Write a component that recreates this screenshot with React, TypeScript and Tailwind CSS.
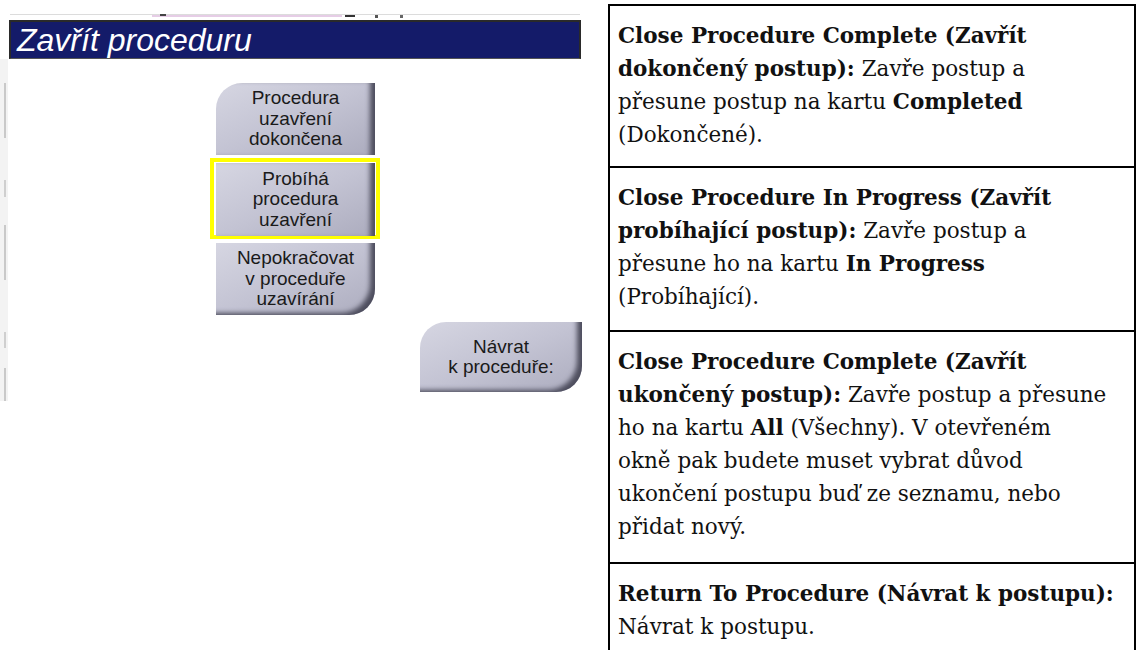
import React from "react";

const btnFace =
  "flex flex-col items-center justify-center text-center text-[19px] leading-[20.5px] text-[#1a1a1a] bg-linear-to-br from-[#d6d6e2] via-[#c3c3d3] to-[#acacbe]";

function Btn({
  lines,
  className,
}: {
  lines: string[];
  className: string;
}) {
  return (
    <div className={`${btnFace} ${className}`} style={{ fontFamily: '"Liberation Sans", Arial, sans-serif' }}>
      {lines.map((l, i) => (
        <span key={i} className="whitespace-nowrap">
          {l}
        </span>
      ))}
    </div>
  );
}

function Row({ children, className }: { children: React.ReactNode; className: string }) {
  return <div className={`pl-[8px] pt-[13px] ${className}`}>{children}</div>;
}

export default function App() {
  return (
    <div className="w-[1136px] h-[650px] overflow-hidden bg-white flex">
      {/* Left: screenshot of the dialog */}
      <div className="w-[608px] shrink-0 flex flex-col relative">
        {/* top strip */}
        <div className="h-[20px] flex items-end pl-[10px]">
          <div className="relative w-[570px] h-[6px] border-t border-[#dcdcdc]">
            <div className="absolute left-[142px] top-0 w-[190px] h-[2px] bg-[#e6cde6]" />
            <div className="absolute left-[150px] top-[-1px] w-[6px] h-[2px] bg-[#444]" />
            <div className="absolute left-[335px] top-0 w-[10px] h-[2px] bg-[#333]" />
            <div className="absolute left-[365px] top-0 w-[3px] h-[3px] bg-[#555]" />
            <div className="absolute left-[390px] top-0 w-[3px] h-[3px] bg-[#666]" />
          </div>
        </div>
        {/* header bar */}
        <div className="ml-[9px] w-[572px] h-[39px] bg-[#141b69] border-2 border-[#2a2a2a] border-b border-b-[#555] flex items-center pl-[6px]">
          <span
            className="italic text-white text-[32px] leading-none"
            style={{ fontFamily: '"Liberation Sans", Arial, sans-serif' }}
          >
            Zavřít proceduru
          </span>
        </div>
        {/* body */}
        <div className="flex flex-1">
          {/* left gray band */}
          <div className="w-[8px] h-[342px] bg-[#f3f3f3] flex flex-col relative">
            <div className="absolute left-[4px] top-[24px] w-[2px] h-[55px] bg-[#c9c9c9]" />
            <div className="absolute left-[4px] top-[121px] w-[2px] h-[17px] bg-[#cfcfcf]" />
            <div className="absolute left-[4px] top-[166px] w-[2px] h-[55px] bg-[#c9c9c9]" />
            <div className="absolute left-[4px] top-[273px] w-[2px] h-[16px] bg-[#cfcfcf]" />
            <div className="absolute left-[4px] top-[309px] w-[2px] h-[33px] bg-[#c9c9c9]" />
          </div>
          <div className="flex flex-col pl-[202px] pt-[24px]">
            <Btn
              lines={["Procedura", "uzavření", "dokončena"]}
              className="ml-[6px] w-[159px] h-[72px] rounded-tl-[26px] shadow-[inset_-8px_0_5px_-3px_#4e4e5e]"
            />
            <div className="mt-[3px] w-[170px] h-[81px] border-[4px] border-[#ffff00] p-[1px] pl-[2px]">
              <Btn
                lines={["Probíhá", "procedura", "uzavření"]}
                className="w-[159px] h-[73px] shadow-[inset_-8px_0_5px_-3px_#4e4e5e]"
              />
            </div>
            <Btn
              lines={["Nepokračovat", "v proceduře", "uzavírání"]}
              className="mt-[4px] ml-[6px] w-[159px] h-[72px] rounded-br-[26px] shadow-[inset_-8px_-5px_5px_-3px_#4e4e5e]"
            />
            <Btn
              lines={["Návrat", "k proceduře:"]}
              className="mt-[7px] ml-[210px] w-[162px] h-[70px] rounded-tl-[26px] rounded-br-[26px] shadow-[inset_-8px_-5px_5px_-3px_#4e4e5e]"
            />
          </div>
        </div>
      </div>

      {/* Right: description table */}
      <div className="flex-1 pt-[4px] flex flex-col">
        <div
          className="flex-1 border-l-2 border-t-2 border-r-2 border-black text-[21.5px] leading-[33px] text-[#111] whitespace-nowrap"
          style={{ fontFamily: '"DejaVu Serif", "Liberation Serif", serif' }}
        >
          <Row className="pb-[15px] border-b-2 border-black">
            <b>Close Procedure Complete (Zavřít</b>
            <br />
            <b>dokončený postup):</b> Zavře postup a
            <br />
            přesune postup na kartu <b>Completed</b>
            <br />
            (Dokončené).
          </Row>
          <Row className="pb-[17px] border-b-2 border-black">
            <b>Close Procedure In Progress (Zavřít</b>
            <br />
            <b>probíhající postup):</b> Zavře postup a
            <br />
            přesune ho na kartu <b>In Progress</b>
            <br />
            (Probíhající).
          </Row>
          <Row className="pb-[19px] border-b-2 border-black">
            <b>Close Procedure Complete (Zavřít</b>
            <br />
            <b>ukončený postup):</b> Zavře postup a přesune
            <br />
            ho na kartu <b>All</b> (Všechny). V otevřeném
            <br />
            okně pak budete muset vybrat důvod
            <br />
            ukončení postupu buď ze seznamu, nebo
            <br />
            přidat nový.
          </Row>
          <Row className="">
            <b>Return To Procedure (Návrat k postupu):</b>
            <br />
            Návrat k postupu.
          </Row>
        </div>
      </div>
    </div>
  );
}
